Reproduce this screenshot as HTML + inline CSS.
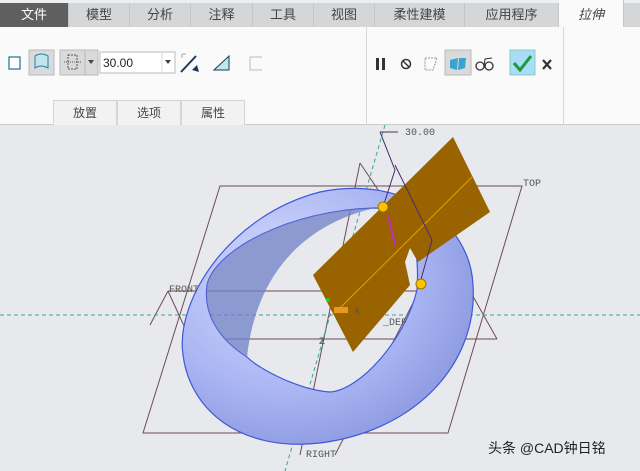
<!DOCTYPE html>
<html><head><meta charset="utf-8"><style>
*{margin:0;padding:0;box-sizing:border-box}
body{width:640px;height:471px;overflow:hidden;background:#e7e9ec;font-family:"Liberation Sans","Noto Sans CJK SC",sans-serif;position:relative}
.tabs{position:absolute;left:0;top:0;width:640px;height:27px;background:#d4d6d8;border-top:3px solid #eceeef}
.tab{position:absolute;top:0;height:24px;line-height:23px;text-align:center;font-size:13px;color:#444;border-right:1px solid #c4c6c8}
.rib{position:absolute;left:0;top:27px;width:640px;height:98px;background:#fafafa;border-bottom:1px solid #c8cacc}
.bt{position:absolute;top:73px;height:25px;line-height:24px;text-align:center;font-size:12px;color:#444;border:1px solid #d4d4d4;border-bottom:none;background:#f2f2f2}
.abs{position:absolute}
</style></head><body>
<div class="tabs">
<div class="tab" style="left:0;width:69px;background:#5f5f5f;color:#fff">文件</div>
<div class="tab" style="left:69px;width:61px">模型</div>
<div class="tab" style="left:130px;width:61px">分析</div>
<div class="tab" style="left:191px;width:62px">注释</div>
<div class="tab" style="left:253px;width:61px">工具</div>
<div class="tab" style="left:314px;width:61px">视图</div>
<div class="tab" style="left:375px;width:90px">柔性建模</div>
<div class="tab" style="left:465px;width:94px">应用程序</div>
<div class="tab" style="left:559px;width:65px;background:#fafafa;font-style:italic;top:-3px;height:27px;line-height:29px">拉伸</div>
</div>
<div class="rib">
<div class="abs" style="left:366px;top:0;width:1px;height:98px;background:#d8d8d8"></div>
<div class="abs" style="left:563px;top:0;width:1px;height:98px;background:#d8d8d8"></div>
<div class="bt" style="left:53px;width:64px">放置</div>
<div class="bt" style="left:117px;width:64px">选项</div>
<div class="bt" style="left:181px;width:64px">属性</div>
</div>
<svg class="abs" style="left:0;top:0" width="640" height="471">
<rect x="9" y="57" width="11" height="12" fill="#fff" stroke="#2a7f9a" stroke-width="1.3"/>
<rect x="29" y="50" width="25" height="25" fill="#d8dadc" stroke="#bbb"/>
<path d="M35 56 Q41 52 48 56 L48 68 Q41 64 35 68Z" fill="#bfe6ef" stroke="#2a7f9a"/>
<rect x="60" y="50" width="38" height="25" fill="#d8dadc" stroke="#bbb"/>
<line x1="85" y1="50" x2="85" y2="75" stroke="#bbb"/>
<rect x="68" y="55" width="9" height="14" fill="none" stroke="#555" stroke-dasharray="2 1"/>
<line x1="64" y1="62" x2="81" y2="62" stroke="#555" stroke-dasharray="1 1"/>
<path d="M88 60 L94 60 L91 64Z" fill="#444"/>
<rect x="100" y="52" width="75" height="21" fill="#fff" stroke="#bbb"/>
<text x="103" y="67" font-size="12" fill="#222" font-family="Liberation Sans">30.00</text>
<line x1="162" y1="53" x2="162" y2="72" stroke="#ddd"/>
<path d="M165 60 L171 60 L168 64Z" fill="#444"/>
<line x1="181" y1="72" x2="196" y2="56" stroke="#1a3a5a" stroke-width="2"/>
<path d="M182 54 L186 54 M182 54 L182 58" stroke="#aaa"/>
<path d="M192 70 L199 72 L197 65Z" fill="#1a3a5a"/>
<path d="M214 70 L229 56 L229 70Z" fill="#bfe6ef" stroke="#1a3a5a"/>
<path d="M250 57 L262 57 M250 57 L250 70 L262 70" stroke="#bbb" fill="none"/>
<rect x="376" y="58" width="3" height="12" fill="#333"/><rect x="382" y="58" width="3" height="12" fill="#333"/>
<circle cx="406" cy="64" r="4.5" fill="none" stroke="#333" stroke-width="1.5"/><line x1="403" y1="61" x2="409" y2="67" stroke="#333" stroke-width="1.5"/>
<path d="M425 58 L437 58 L433 70 L425 70Z" fill="none" stroke="#999" stroke-dasharray="2 1"/>
<rect x="445" y="50" width="26" height="25" fill="#d8dadc" stroke="#bbb"/>
<path d="M450 60 L458 58 L457 70 L450 68Z M459 58 L466 58 L465 68 L458 70Z" fill="#3ba3d0"/>
<circle cx="480" cy="66" r="4" fill="none" stroke="#333" stroke-width="1.3"/><circle cx="489" cy="66" r="4" fill="none" stroke="#333" stroke-width="1.3"/><path d="M484 66 L485 59 L492 58" fill="none" stroke="#333"/>
<rect x="510" y="50" width="25" height="25" fill="#a8ddf5" stroke="#8cc"/>
<path d="M514 63 L520 70 L531 56" fill="none" stroke="#1d9a3a" stroke-width="3"/>
<path d="M543 60 L551 69 M551 60 L543 69" stroke="#333" stroke-width="2.2"/>
<g stroke="#6e4c55" stroke-width="1" fill="none">
<path d="M220 186 L522 186 L448 433 L143 433Z"/>
<path d="M168 291 L470 291 M190 339 L497 339 M168 291 L190 339 M470 291 L497 339 M168 291 L150 325"/>
<path d="M360 163 L395 215 M360 163 L300 455 M395 215 L420 260 M335 455 L430 270"/>
</g>
<line x1="0" y1="315" x2="640" y2="315" stroke="#3aa3a0" stroke-dasharray="4 3"/>
<line x1="385" y1="125" x2="285" y2="471" stroke="#3aa3a0" stroke-dasharray="4 3"/>
<defs>
<radialGradient id="rg" cx="0.35" cy="0.35" r="0.75">
<stop offset="0" stop-color="#ffffff"/><stop offset="0.12" stop-color="#cdd4fb"/><stop offset="0.6" stop-color="#aab5f3"/><stop offset="1" stop-color="#8694dc"/></radialGradient>
</defs>
<path fill-rule="evenodd" fill="url(#rg)" stroke="#3f58d8" stroke-width="1.2"
d="M183 355 C175 300 230 215 320 192 C400 175 470 220 473 285 C478 360 420 430 320 443 C240 452 190 410 183 355Z
M207 285 C215 250 290 210 375 208 C410 208 420 245 417 290 C405 340 360 390 330 392 C300 390 260 370 247 357 C220 340 203 315 207 285Z"/>
<path d="M207 285 C215 250 290 210 375 208 C345 215 260 240 247 357 C220 340 203 315 207 285Z" fill="#6f7fc8" opacity="0.75"/>
<path d="M453 137 L490 212 L418 262 L410 248 L405 262 L410 285 L353 352 L313 275Z" fill="#996300"/>
<line x1="335" y1="313" x2="472" y2="177" stroke="#e6a000" stroke-width="1"/>
<g stroke="#4a2a6a" fill="none" stroke-width="1">
<path d="M380 132 L398 132 M380 132 L395 170 L383 207 M395 165 L432 240 L420 283"/>
</g>
<line x1="395" y1="245" x2="388" y2="215" stroke="#c030c0" stroke-width="2"/>
<circle cx="383" cy="207" r="5" fill="#f8c400" stroke="#a07000"/>
<circle cx="421" cy="284" r="5" fill="#f8c400" stroke="#a07000"/>
<circle cx="328" cy="300" r="2" fill="#2c2"/>
<rect x="334" y="307" width="14" height="6" fill="#e89a20"/>
<g font-family="Liberation Mono" font-size="10" fill="#555">
<text x="405" y="135">30.00</text>
<text x="523" y="186">TOP</text>
<text x="169" y="292">FRONT</text>
<text x="306" y="457">RIGHT</text>
<text x="383" y="325">_DEF</text>
<text x="354" y="314">X</text>
<text x="319" y="344">Z</text>
</g>
<text x="488" y="453" font-size="14" fill="#222">头条 @CAD钟日铭</text>
</svg>
</body></html>
